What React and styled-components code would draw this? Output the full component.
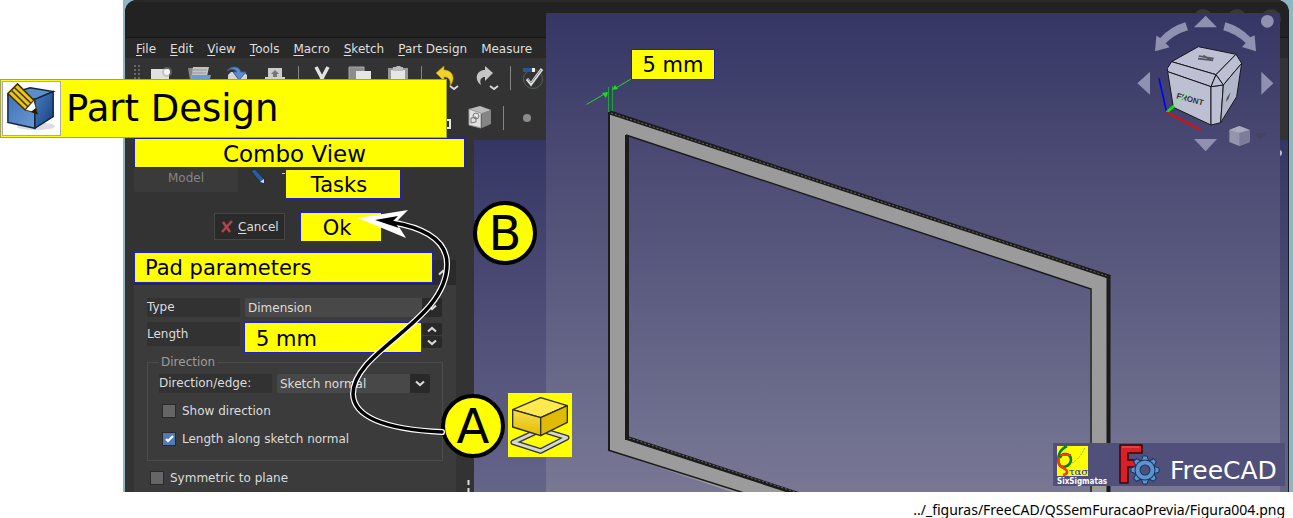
import React from "react";
import styled, { createGlobalStyle } from "styled-components";

const UI_FONT = '"DejaVu Sans", sans-serif';
const YELLOW = "#ffff00";

const Global = createGlobalStyle`
  * { box-sizing: border-box; }
  body { margin: 0; background: #fff; color: #000; font-family: ${UI_FONT}; }
  button, input, select { font: inherit; color: inherit; }
  h1, h2, h3, p { margin: 0; font-weight: 400; }
  svg { display: block; }
`;

const Figure = styled.figure`
  margin: 0;
`;

const Stage = styled.div`
  position: relative;
  overflow: hidden;
`;

const Desktop = styled.div`
  margin-left: 123px;
  padding: 0 4px 0 2px;
  background: #8fb6c3;
`;

const AppWindow = styled.div`
  background: #333;
  border-radius: 12px 12px 0 0;
  overflow: hidden;
  border-right: 1px solid #1c1c1c;
`;

const TitleBar = styled.header`
  height: 38px;
  display: flex;
  justify-content: flex-end;
  gap: 14px;
  padding: 7px 7px 0 0;
  background: #222;
  border-top: 2px solid #2c2825;
  border-bottom: 1px solid #161616;
`;

const WindowButton = styled.button`
  width: 20px;
  height: 20px;
  padding: 0;
  border: 0;
  border-radius: 50%;
  background: #383838;
`;

const MenuBar = styled.nav`
  height: 20px;
  display: flex;
  align-items: center;
  gap: 14px;
  padding: 2px 0 0 11px;
  background: #292929;
`;

const MenuItem = styled.button`
  padding: 0;
  border: 0;
  background: none;
  color: #dfdfdf;
  font: 12px/18px ${UI_FONT};
  white-space: nowrap;
  u { text-underline-offset: 2px; }
`;

const Toolbar = styled.div`
  height: 40px;
  display: flex;
  align-items: center;
  padding-left: ${(p) => p.$indent}px;
`;

const Grip = styled.span`
  width: 9px;
  height: 28px;
  background: radial-gradient(circle, #686868 1px, transparent 1px) 0 0 / 4px 4px;
`;

const Tool = styled.button`
  width: ${(p) => (p.$menu ? 40 : 38)}px;
  height: 40px;
  padding: 0;
  border: 0;
  background: none;
  display: grid;
  place-items: center;
  flex: none;
`;

const Separator = styled.span`
  width: 1px;
  height: 24px;
  margin: 0 4px;
  background: #858585;
  flex: none;
`;

const Body = styled.div`
  display: flex;
`;

const Dock = styled.aside`
  width: 349px;
  flex: none;
  padding: 0 9px;
`;

const Backdrop = styled.div`
  flex: 1;
  margin-top: 2px;
  display: flex;
  justify-content: flex-end;
  padding: 8px 5px 0 0;
  background: linear-gradient(#363664, #65658a);
`;

const DockTitle = styled.h2`
  height: 30px;
  border: 1px solid #2020b8;
  background: ${YELLOW};
  color: #000;
  font: 23px/30px ${UI_FONT};
  text-align: center;
  padding-right: 10px;
`;

const Tabs = styled.div`
  height: 32px;
  display: flex;
  align-items: flex-start;
`;

const ModelTab = styled.button`
  width: 104px;
  height: 24px;
  padding: 0 0 4px;
  border: 0;
  border-radius: 0 0 2px 2px;
  background: #3a3a3a;
  color: #858585;
  font: 12px/20px ${UI_FONT};
`;

const TabIcon = styled.span`
  width: 47px;
  padding-left: 11px;
`;

const Callout = styled.button`
  height: ${(p) => p.$h || 30}px;
  width: ${(p) => p.$w}px;
  margin-top: ${(p) => p.$drop || 0}px;
  padding: ${(p) => p.$pad || "0"};
  border: 1px solid #2020c8;
  background: ${YELLOW};
  color: #000;
  font: 21px/30px ${UI_FONT};
  text-align: ${(p) => p.$align || "center"};
  white-space: nowrap;
`;

const Actions = styled.div`
  display: flex;
  align-items: flex-start;
  gap: 15px;
  padding: 12px 0 10px 80px;
`;

const Cancel = styled.button`
  width: 71px;
  height: 27px;
  margin-top: 1px;
  padding: 0 0 0 6px;
  display: flex;
  align-items: center;
  gap: 5px;
  border: 1px solid #464646;
  background: #2a2a2a;
  color: #dcdcdc;
  font: 12px/18px ${UI_FONT};
  u { text-underline-offset: 2px; }
`;

const SectionHead = styled.div`
  width: 322px;
  height: 33px;
  display: flex;
  justify-content: space-between;
  background: linear-gradient(#333 8px, #2a2a2a 8px);
`;

const Collapse = styled.button`
  width: 23px;
  padding: 8px 0 0 5px;
  border: 0;
  background: none;
`;

const Section = styled.form`
  width: 322px;
  height: 207px;
  overflow: hidden;
  padding: 13px 13px 0;
  background: #3b3b3b;
  color: #dcdcdc;
  font: 12px/18px ${UI_FONT};
`;

const Row = styled.div`
  display: flex;
  align-items: flex-start;
  height: ${(p) => p.$h}px;
`;

const FieldLabel = styled.label`
  width: ${(p) => p.$w}px;
  height: ${(p) => p.$h || 19}px;
  line-height: ${(p) => p.$h || 19}px;
  margin-right: ${(p) => p.$gap || 5}px;
  background: #323232;
  flex: none;
  white-space: nowrap;
`;

const SelectBox = styled.span`
  position: relative;
  width: ${(p) => p.$w}px;
  height: 19px;
  flex: none;
  select {
    appearance: none;
    width: 100%;
    height: 19px;
    padding: 0 20px 0 3px;
    border: 0;
    border-radius: 2px;
    background: linear-gradient(to left, #292929 20px, #484848 20px);
    line-height: 18px;
  }
  svg { position: absolute; right: 5px; top: 6px; pointer-events: none; }
`;

const LengthInput = styled.input`
  width: 178px;
  height: 31px;
  padding: 2px 0 0 11px;
  border: 1px solid #2020c8;
  background: ${YELLOW};
  color: #000;
  font: 21px/28px ${UI_FONT};
`;

const Spinner = styled.span`
  display: grid;
  gap: 1px;
  margin-top: 1px;
  button {
    width: 20px;
    height: 12px;
    padding: 0;
    border: 0;
    border-radius: 2px;
    background: #292929;
    display: grid;
    place-items: center;
  }
`;

const Group = styled.fieldset`
  height: 108px;
  margin: 0 0 3px;
  padding: 3px 11px 0;
  border: 1px solid #4c4c4c;
  min-width: 0;
  legend { color: #9b9b9b; padding: 0 2px; line-height: 18px; }
`;

const Check = styled.label`
  position: relative;
  display: flex;
  align-items: center;
  gap: 6px;
  height: 28px;
  padding-left: 3px;
  input {
    appearance: none;
    width: 14px;
    height: 14px;
    margin: 0;
    border: 1px solid #292929;
    background: #666;
  }
  input:checked { background: #5379b8; }
  svg { position: absolute; left: 6px; top: 10px; pointer-events: none; }
`;

const Viewport = styled.div`
  position: absolute;
  left: 546px;
  right: 13px;
  top: 13px;
  bottom: 0;
  overflow: hidden;
  background: linear-gradient(#363665, #787895);
`;

const Scene = styled.svg`
  width: 100%;
  height: 100%;
`;

const NavCube = styled.svg`
  position: absolute;
  right: 0;
  top: 0;
`;

const DimensionTag = styled.output`
  position: absolute;
  left: 631px;
  top: 49px;
  width: 84px;
  height: 31px;
  border: 1px solid #2020b8;
  background: ${YELLOW};
  font: 21px/31px ${UI_FONT};
  text-align: center;
`;

const Banner = styled.h1`
  position: absolute;
  left: 0;
  top: 79px;
  width: 447px;
  height: 59px;
  display: flex;
  align-items: center;
  gap: 5px;
  padding-left: 1px;
  border: 1px solid #a5a545;
  background: ${YELLOW};
  font: 37px/58px ${UI_FONT};
  svg { background: #fff; border: 1px solid #aaa; }
`;

const Badge = styled.span`
  position: absolute;
  left: ${(p) => p.$x}px;
  top: ${(p) => p.$y}px;
  width: 64px;
  height: 64px;
  border: 4px solid #000;
  border-radius: 50%;
  background: ${YELLOW};
  font: 48px/56px ${UI_FONT};
  text-align: center;
`;

const Overlay = styled.svg`
  position: absolute;
  left: ${(p) => p.$x}px;
  top: ${(p) => p.$y}px;
  pointer-events: none;
`;

const Brand = styled.div`
  position: absolute;
  right: 8px;
  bottom: 6px;
  width: 232px;
  height: 43px;
  display: flex;
  background: #50507a;
  color: #fff;
  font: 25px/56px ${UI_FONT};
`;

const Caption = styled.figcaption`
  padding: 8px 8px 0 0;
  text-align: right;
  font: 14px/20px "Noto Sans", sans-serif;
`;

const Chevron = ({ up }) => (
  <svg width="10" height="7" viewBox="0 0 10 7">
    <path d={up ? "M1 5.5 5 2l4 3.5" : "M1 1.5 5 5l4-3.500"} fill="none" stroke="#d8d8d8" strokeWidth="2.2" />
  </svg>
);

const icons = {
  New: (
    <svg width="24" height="26" viewBox="0 0 24 26">
      <path d="M2 4h18v20H2z" fill="#e0e0e0" />
      <circle cx="18" cy="7" r="5" fill="#999" opacity=".45" />
      <circle cx="18" cy="7" r="3" fill="#f4f4f4" />
    </svg>
  ),
  Open: (
    <svg width="24" height="26" viewBox="0 0 24 26">
      <path d="M1 3h6l2 2v16H4z" fill="#888" />
      <path d="M6 2h16l-3 14H4z" fill="#c4c4c4" />
      <path d="M6 5h14M5 8h14" stroke="#999" />
      <path d="M5 10h19l-3 12H3z" fill="#6c9bd2" />
    </svg>
  ),
  Save: (
    <svg width="24" height="26" viewBox="0 0 24 26">
      <path d="m3 10 3-3h13l3 3v13H3z" fill="#d5d5d5" />
      <path d="M2 6C5 1 14 0 16 7h5l-7 8-6-8h4C10 4 6 3 2 6z" fill="#5d8dc9" stroke="#315e9e" />
    </svg>
  ),
  Print: (
    <svg width="24" height="26" viewBox="0 0 24 26">
      <path d="M5 3h14v10H5z" fill="#ccc" />
      <path d="M12 5l4 4h-2v4h-4V9H8z" fill="#777" />
      <path d="M2 12h20v9H2z" fill="#d0d0d0" />
    </svg>
  ),
  Cut: (
    <svg width="20" height="26" viewBox="0 0 20 26">
      <path d="M4 2l8 15M16 2 8 17" stroke="#e2e2e2" strokeWidth="3.500" />
    </svg>
  ),
  Copy: (
    <svg width="24" height="26" viewBox="0 0 24 26">
      <path d="M1 2h15v16H1z" fill="#8c8c8c" stroke="#aaa" />
      <path d="M8 6h15v17H8z" fill="#e5e5e5" />
    </svg>
  ),
  Paste: (
    <svg width="22" height="26" viewBox="0 0 22 26">
      <path d="M1 3h20v21H1z" fill="#999" />
      <path d="M4 5h14v17H4z" fill="#e5e5e5" />
      <path d="M6 2h3l1-1h3l1 1h2v4H6z" fill="#bbb" />
    </svg>
  ),
  Undo: (
    <svg width="26" height="28" viewBox="0 0 26 28">
      <path d="M3 9 11 2v4c9 0 12 9 6 16 1-7-2-9-6-9v4z" fill="#f0d22a" stroke="#a98a08" strokeWidth=".7" />
      <path d="m17 22 4 3 4-3" fill="none" stroke="#d8d8d8" strokeWidth="2" />
    </svg>
  ),
  Redo: (
    <svg width="26" height="28" viewBox="0 0 26 28">
      <path d="M20 9 12 2v4C3 6 1 16 8 21c-2-6 1-8 4-8v4z" fill="#c5c5c5" />
      <path d="m17 22 4 3 4-3" fill="none" stroke="#d8d8d8" strokeWidth="2" />
    </svg>
  ),
  Validate: (
    <svg width="24" height="26" viewBox="0 0 24 26">
      <circle cx="11" cy="14" r="9.500" fill="none" stroke="#53605c" />
      <path d="M1 3h12v4H1z" fill="#28588e" />
      <path d="M10 3h3v4h-3z" fill="#eee" />
      <path d="m5 14 4 5L20 4" fill="none" stroke="#ddd" strokeWidth="3" />
      <path d="m6 14 3 4L19 5" fill="none" stroke="#888" />
    </svg>
  ),
  Sketch: (
    <svg width="26" height="26" viewBox="0 0 26 26">
      <path d="m2 4 11-3 11 4-9 4z" fill="#bbb" />
      <path d="m15 8 9-3v14l-9 4z" fill="#858585" />
      <path d="M2 4l12 4v15L2 20z" fill="#e2e2e2" stroke="#999" />
      <circle cx="9" cy="11" r="3" fill="none" stroke="#777" />
      <path d="m4 13 5-1v5l-5 1z" fill="none" stroke="#777" />
    </svg>
  ),
  Line: (
    <svg width="20" height="26" viewBox="0 0 20 26">
      <path d="M10 15h8v8h-8z" fill="none" stroke="#e6e6e6" strokeWidth="2" />
    </svg>
  ),
  Point: (
    <svg width="10" height="10" viewBox="0 0 10 10">
      <circle cx="5" cy="5" r="4" fill="#8c8c8c" />
    </svg>
  ),
};

const menus = ["File", "Edit", "View", "Tools", "Macro", "Sketch", "Part Design"];

function PartDesignIcon() {
  return (
    <svg width="59" height="55" viewBox="0 0 59 55">
      <defs>
        <linearGradient id="pf" x1="0" y1="0" x2="1" y2="1"><stop stopColor="#3f73b8" /><stop offset="1" stopColor="#6c98d2" /></linearGradient>
        <linearGradient id="pr" x1="0" y1="0" x2="1" y2="1"><stop stopColor="#4a7dc0" /><stop offset="1" stopColor="#173f7c" /></linearGradient>
      </defs>
      <ellipse cx="34" cy="46" rx="20" ry="4" fill="#ddd" />
      <path d="m5 13 23-7 24 4-19 8z" fill="#5c8dc9" stroke="#10233f" strokeWidth="1.500" />
      <path d="m5 13 28 5v30L5 42z" fill="url(#pf)" stroke="#10233f" strokeWidth="1.500" />
      <path d="m33 18 19-8v26L33 48z" fill="url(#pr)" stroke="#10233f" strokeWidth="1.500" />
      <path d="M5 12 15 2l17 17-9 10z" fill="#e9c51c" stroke="#3c3005" strokeWidth="1.600" />
      <path d="m9 9 17 17M12 6l17 16" stroke="#3c3005" strokeWidth="1.500" />
      <path d="m23 29 9-10 4 14z" fill="#fff" stroke="#3c3005" />
      <path d="m29 31 5-4 2 7z" fill="#251c00" />
    </svg>
  );
}

function FrameScene() {
  return (
    <Scene role="img" aria-label="Frame solid">
      <g transform="translate(-546 -13)">
        <path d="M609 112 1109 276V620L608 450ZM628 136V438L1090 590V289Z" fill="#9b9b9b" fillRule="evenodd" />
        <g fill="none" stroke="#1b1b1b">
          <path d="M609 450V112" strokeWidth="2" />
          <path d="M610 112.500 1110 277" strokeWidth="4" />
          <path d="M611 113 1107 276" stroke="#6c6c66" strokeWidth="1" strokeDasharray="2 2" />
          <path d="M1108.500 275V500" strokeWidth="4" />
          <path d="M627 135V440" strokeWidth="4" />
          <path d="M626 135 1091 289V500" strokeWidth="1.500" />
          <path d="M608 450 760 498" strokeWidth="1.500" />
          <path d="M627 438 820 501" strokeWidth="4" />
          <path d="M629 438 820 500" stroke="#6c6c66" strokeWidth="1" strokeDasharray="2 2" />
        </g>
        <g stroke="#16e016" fill="#16e016">
          <path d="M608.500 87v25M612.500 86v25" stroke="#22a03c" />
          <path d="m586.500 104.500 17-10M631 79l-15 9" />
          <path d="m608 92-2 6-4-5zM612 90l3-5 3 4z" stroke="none" />
        </g>
      </g>
    </Scene>
  );
}

function NavigationCube() {
  return (
    <NavCube width="160" height="157" viewBox="0 39 480 471" role="img" aria-label="Navigation cube">
      <g fill="#9090b0">
        <path d="M222 82 257 47l34 35zM52 250l38-35v69zM424 215l36 35-36 34zM222 417h69l-34 37z" />
        <circle cx="442" cy="64" r="19" />
        <path d="M196 67q-45 13-75 47l-12-7-4 47 44-12-12-12q24-26 67-39zM316 67q43 12 75 45l13-6 4 48-42-13 11-12q-30-28-67-38z" />
      </g>
      <g fill="#bcc0d2" stroke="#17171c" strokeWidth="3" strokeLinejoin="round">
        <path d="m155 185 80-45 113 23-60 61z" />
        <path d="m142 205 13-20 133 39-15 36-130-45z" />
        <path d="m143 215 130 45v115l-113-53z" />
        <path d="m288 224 60-61 17 27-55 65z" />
        <path d="m273 260 37-5-8 113-29 7z" />
        <path d="m310 255 55-65-15 100-48 78z" fill="#b2b6c9" />
        <path d="m288 224-15 36 37-5z" />
      </g>
      <path d="m236 168 45 8M234 176l45 5M250 166l25 16" stroke="#34343c" strokeWidth="5" opacity=".75" />
      <path d="m332 276-6 20-8 10 2-12z" fill="#55555f" />
      <text x="168" y="295" transform="rotate(15 168 295)" fontFamily="Liberation Sans, sans-serif" fontWeight="700" fontSize="24" fill="#30303a">FRONT</text>
      <g strokeWidth="5" fill="none">
        <path d="m140 337-23-102" stroke="#0000ff" />
        <path d="m140 337 22-19" stroke="#00f000" strokeWidth="8" />
        <path d="m162 318 48-46" stroke="#8de59b" />
        <path d="m140 337 103 53" stroke="#ff0000" />
      </g>
      <path d="m358 378-30 12v36l30 12 31-12v-36z" fill="#9494ae" />
      <path d="m328 390 30 9 31-9-31-12z" fill="#aaaabd" />
      <path d="m358 399 31-9v36l-31 12z" fill="#7d7d99" />
      <path d="M402 400h38l-19 18z" fill="#44445c" />
    </NavCube>
  );
}

function PadIcon() {
  return (
    <Overlay $x={508} $y={393} width="64" height="64" viewBox="0 0 192 192" role="img" aria-label="Pad">
      <defs>
        <linearGradient id="pg" x1="0" y1="0" x2="0" y2="1"><stop stopColor="#f5dd4e" /><stop offset="1" stopColor="#e2bd00" /></linearGradient>
      </defs>
      <path d="M0 0h192v192H0z" fill={YELLOW} />
      <path d="m98 110 78 24-78 40-82-26z" fill="none" stroke="#2e3436" strokeWidth="17" strokeLinejoin="round" />
      <path d="m98 110 78 24-78 40-82-26z" fill="none" stroke="#d3d7cf" strokeWidth="9" strokeLinejoin="round" />
      <g stroke="#302b00" strokeWidth="4" strokeLinejoin="round">
        <path d="m14 50 84-36 80 24-80 36z" fill="#fce94f" />
        <path d="m14 50 84 24v54l-84-26z" fill="url(#pg)" />
        <path d="m98 74 80-36v50l-80 40z" fill="#e0bb05" />
      </g>
    </Overlay>
  );
}

function SixSigmatasLogo() {
  return (
    <svg width="60" height="43" viewBox="0 0 60 43" role="img" aria-label="SixSigmatas">
      <path d="M4 3h31v30H4z" fill={YELLOW} />
      <path d="M14 3C6 7 4 14 6 21c2 5 11 3 12-4 0-7-9-8-11-2" fill="none" stroke="#087f20" strokeWidth="2.600" />
      <path d="M6 14c-2 8 2 10 6 12 3 2 3 5-2 6" fill="none" stroke="#f03b10" strokeWidth="2.600" />
      <path d="M7 12h11" stroke="#f03b10" strokeWidth="2" />
      <path d="M19 20q8-4 13-16" fill="none" stroke="#999" strokeDasharray="2 1" />
      <text x="16" y="32" fontFamily="DejaVu Serif, serif" fontSize="10" fill="#1616e0">τασ</text>
      <text x="4" y="41" fontFamily="DejaVu Sans Condensed, sans-serif" fontWeight="700" fontSize="8" fill="#fff">SixSigmatas</text>
    </svg>
  );
}

function FreeCadLogo() {
  const teeth = Array.from({ length: 8 }, (_, i) => i * 45);
  return (
    <svg width="57" height="43" viewBox="0 0 57 43" role="img" aria-label="FreeCAD logo">
      <path d="M7 2h22v8H15v7h8v7h-8v16H7z" fill="#d91f28" stroke="#350607" strokeWidth="1.500" />
      <path d="M9 4h17" stroke="#f36568" />
      <g transform="translate(32 27)">
        <g fill="#5e94cd" stroke="#173464">
          {teeth.map((a) => (
            <path key={a} d="m-4-8 2-6h4l2 6z" transform={`rotate(${a})`} />
          ))}
        </g>
        <circle r="7.500" fill="none" stroke="#173464" strokeWidth="6" />
        <circle r="7.500" fill="none" stroke="#5e94cd" strokeWidth="4" />
      </g>
    </svg>
  );
}

export default function App() {
  return (
    <Figure>
      <Global />
      <Stage>
        <Desktop>
          <AppWindow>
            <TitleBar>
              <WindowButton aria-label="Minimize" />
              <WindowButton aria-label="Maximize" />
              <WindowButton aria-label="Close" />
            </TitleBar>
            <MenuBar>
              {menus.map((m) => (
                <MenuItem key={m}><u>{m[0]}</u>{m.slice(1)}</MenuItem>
              ))}
              <MenuItem>Measure</MenuItem>
            </MenuBar>
            <Toolbar $indent={8}>
              <Grip />
              {["New", "Open", "Save", "Print"].map((n) => <Tool key={n} aria-label={n}>{icons[n]}</Tool>)}
              <Separator />
              {["Cut", "Copy", "Paste"].map((n) => <Tool key={n} aria-label={n}>{icons[n]}</Tool>)}
              <Separator />
              {["Undo", "Redo"].map((n) => <Tool key={n} $menu aria-label={n}>{icons[n]}</Tool>)}
              <Separator />
              <Tool aria-label="Validate">{icons.Validate}</Tool>
            </Toolbar>
            <Toolbar $indent={298}>
              <Tool aria-label="Line">{icons.Line}</Tool>
              <Tool aria-label="Create sketch">{icons.Sketch}</Tool>
              <Separator />
              <Tool aria-label="Point">{icons.Point}</Tool>
            </Toolbar>
            <Body>
              <Dock>
                <DockTitle>Combo View</DockTitle>
                <Tabs>
                  <ModelTab>Model</ModelTab>
                  <TabIcon>
                    <svg width="36" height="20" viewBox="0 0 36 20">
                      <path d="m2 3 4-2 9 10v4l-4-1z" fill="#2d5c9d" stroke="#142e55" />
                      <path d="m11 14 4-3v4z" fill="#ddd" />
                      <path d="M33 5.500h3" stroke="#ccc" />
                    </svg>
                  </TabIcon>
                  <Callout $w={116} $drop={1} $pad="0 8px 0 0">Tasks</Callout>
                </Tabs>
                <Actions>
                  <Cancel>
                    <svg width="12" height="14" viewBox="0 0 12 14">
                      <path d="m2 2 7 10M11 1 1 12" stroke="#b5434d" strokeWidth="2.500" />
                    </svg>
                    <span><u>C</u>ancel</span>
                  </Cancel>
                  <Callout $w={82} $pad="0 8px 0 0">Ok</Callout>
                </Actions>
                <SectionHead>
                  <Callout as="h3" $w={299} $h={31} $align="left" $pad="0 0 0 10px">Pad parameters</Callout>
                  <Collapse aria-label="Collapse"><Chevron up /></Collapse>
                </SectionHead>
                <Section onSubmit={(e) => e.preventDefault()}>
                  <Row $h={24}>
                    <FieldLabel htmlFor="type" $w={93}>Type</FieldLabel>
                    <SelectBox $w={197}>
                      <select id="type"><option>Dimension</option></select>
                      <Chevron />
                    </SelectBox>
                  </Row>
                  <Row $h={31}>
                    <FieldLabel htmlFor="length" $w={93} $h={24} $gap={4}>Length</FieldLabel>
                    <LengthInput id="length" defaultValue="5 mm" />
                    <Spinner>
                      <button type="button" aria-label="Increase"><Chevron up /></button>
                      <button type="button" aria-label="Decrease"><Chevron /></button>
                    </Spinner>
                  </Row>
                  <Group>
                    <legend>Direction</legend>
                    <Row $h={23}>
                      <FieldLabel htmlFor="edge" $w={113}>Direction/edge:</FieldLabel>
                      <SelectBox $w={153}>
                        <select id="edge"><option>Sketch normal</option></select>
                        <Chevron />
                      </SelectBox>
                    </Row>
                    <Check><input type="checkbox" />Show direction</Check>
                    <Check>
                      <input type="checkbox" defaultChecked />
                      <svg width="9" height="8" viewBox="0 0 9 8"><path d="m1 4 2 2 5-5" fill="none" stroke="#fff" strokeWidth="2.200" /></svg>
                      Length along sketch normal
                    </Check>
                  </Group>
                  <Check><input type="checkbox" />Symmetric to plane</Check>
                </Section>
              </Dock>
              <Backdrop>
                <svg width="4" height="10" viewBox="0 0 4 10"><circle cx="0" cy="5" r="3" fill="#bbbbd0" /></svg>
              </Backdrop>
            </Body>
          </AppWindow>
        </Desktop>

        <Viewport>
          <FrameScene />
          <NavigationCube />
        </Viewport>
        <DimensionTag>5 mm</DimensionTag>
        <Banner><PartDesignIcon />Part Design</Banner>
        <Badge $x={473} $y={201}>B</Badge>
        <Badge $x={441} $y={394}>A</Badge>
        <PadIcon />
        <Overlay $x={340} $y={200} width="132" height="292" viewBox="340 200 132 292">
          <path d="M442 432C400 430 354 422 353 394C353 350 447 322 447 264C447 242 427 228 390 222" fill="none" stroke="#fff" strokeWidth="6" strokeLinecap="round" />
          <path d="m358 218 50-8-12 12 10 16z" fill="#fff" />
          <path d="M442 432C400 430 354 422 353 394C353 350 447 322 447 264C447 242 427 228 390 222" fill="none" stroke="#000" strokeWidth="3.500" strokeLinecap="round" />
          <path d="m375 220 23-4-5 5 6 7z" fill="#000" />
          <path d="M468.500 480v5M468.500 488v4" stroke="#ddd" strokeWidth="2" />
        </Overlay>
        <Brand><SixSigmatasLogo /><FreeCadLogo />FreeCAD</Brand>
      </Stage>
      <Caption>../_figuras/FreeCAD/QSSemFuracaoPrevia/Figura004.png</Caption>
    </Figure>
  );
}
